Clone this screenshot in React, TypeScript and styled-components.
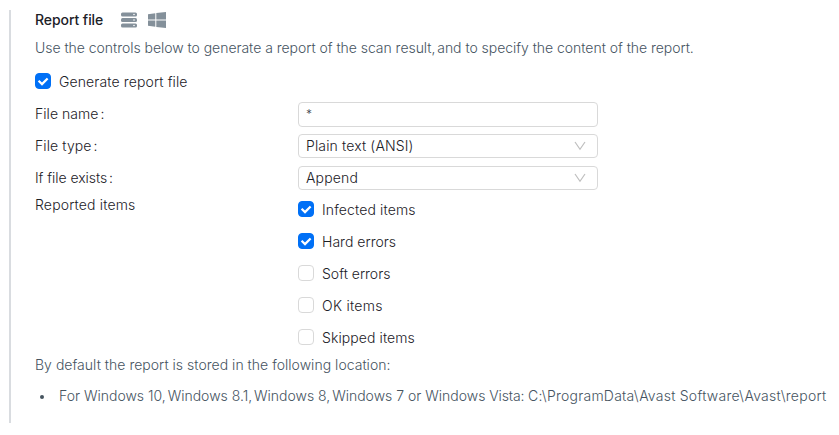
import React from "react";
import styled, { createGlobalStyle } from "styled-components";

const GlobalStyle = createGlobalStyle`
  * { box-sizing: border-box; }
  body {
    margin: 0;
    background: #fff;
    overflow: hidden;
    font-family: Inter, "Liberation Sans", sans-serif;
    font-size: 14px;
    font-weight: 300;
    line-height: 22px;
    color: #1c2127;
  }
`;

const Section = styled.section`
  margin: 10px 0 0 9px;
  height: 413px;
  padding-left: 24px;
  border-left: 2px solid #d9dce0;
`;

const Header = styled.header`
  display: flex;
  align-items: center;
  height: 20px;
`;

const Title = styled.h2`
  width: 86px;
  margin: 0;
  font-size: 14px;
  font-weight: 500;
  line-height: 20px;
  letter-spacing: -0.07px;
  white-space: nowrap;
`;

const PlatformIcon = styled.svg<{ $gap?: number }>`
  display: block;
  flex: none;
  margin-right: ${(p) => p.$gap ?? 0}px;
  fill: #84909a;
`;

const Text = styled.span<{ $track?: number }>`
  letter-spacing: ${(p) => p.$track ?? 0}px;
  white-space: nowrap;
`;

const Thin = styled.span`
  letter-spacing: -2.1px;
`;

const Wildcard = styled.span`
  font-size: 12px;
  line-height: 20px;
  color: #3c444b;
`;

const Note = styled.p<{ $top: number }>`
  margin: ${(p) => p.$top}px 0 0;
  height: 22px;
  color: #46545f;
`;

const CheckRow = styled.label`
  display: flex;
  align-items: center;
  height: 32px;
`;

const Toggle = styled.div`
  margin-top: 7px;
`;

const Box = styled.span<{ $on: boolean }>`
  display: flex;
  align-items: center;
  justify-content: center;
  flex: none;
  width: 16px;
  height: 16px;
  margin: 0 8px 2px 0;
  border: 1px solid ${(p) => (p.$on ? "#0070f6" : "#d9d9d9")};
  border-radius: 4px;
  background: ${(p) => (p.$on ? "#0070f6" : "#fff")};
`;

const Form = styled.div`
  display: grid;
  grid-template-columns: 263px 300px;
  grid-template-rows: repeat(3, 32px) 160px;
  align-items: center;
`;

const ItemsLabel = styled.div`
  align-self: start;
`;

const Field = styled.div<{ $height: number }>`
  display: flex;
  align-items: center;
  justify-content: space-between;
  height: ${(p) => p.$height}px;
  padding: 0 11px 0 7px;
  border: 1px solid #d9d9d9;
  border-radius: 4px;
`;

const List = styled.ul`
  margin: 9px 0 0;
  padding: 0;
  list-style: none;
  color: #46545f;
`;

const Item = styled.li`
  display: flex;
  align-items: center;
  height: 22px;
`;

const Bullet = styled.span`
  flex: none;
  width: 4px;
  height: 4px;
  margin: 1px 15px 0 5px;
  border-radius: 50%;
  background: #46545f;
`;

const Tick = () => (
  <svg width="14" height="14" viewBox="0 0 14 14" fill="none" stroke="#fff" strokeWidth="2.2">
    <path d="M2.6 6.8 6 10.1 11.6 4.4" />
  </svg>
);

const Chevron = () => (
  <svg width="12" height="12" viewBox="0 0 12 12" fill="none" stroke="#bfbfbf" strokeWidth="1.2">
    <path d="M1 2 6 9.3 11 2" />
  </svg>
);

const FieldLabel = ({ children, track }: { children: string; track: number }) => (
  <Text $track={track}>
    {children}
    <Thin> </Thin>:
  </Text>
);

const Check = ({ label, on = false, track }: { label: string; on?: boolean; track: number }) => (
  <CheckRow>
    <Box $on={on}>{on && <Tick />}</Box>
    <Text $track={track}>{label}</Text>
  </CheckRow>
);

const options = [
  { label: "Infected items", on: true, track: 0.13 },
  { label: "Hard errors", on: true, track: 0.02 },
  { label: "Soft errors", on: false, track: 0 },
  { label: "OK items", on: false, track: 0.28 },
  { label: "Skipped items", on: false, track: 0.09 },
];

export default function App() {
  return (
    <>
      <GlobalStyle />
      <Section>
        <Header>
          <Title>Report file</Title>
          <PlatformIcon $gap={11} width="16" height="16" viewBox="0 0 16 16">
            <rect x="0" y="0.5" width="16" height="4" rx="1.5" />
            <rect x="0" y="6" width="16" height="4" rx="1.5" />
            <rect x="0" y="11.5" width="16" height="4" rx="1.5" />
            <g fill="#fff">
              <circle cx="13" cy="2.5" r="0.8" />
              <circle cx="13" cy="8" r="0.8" />
              <circle cx="13" cy="13.5" r="0.8" />
            </g>
          </PlatformIcon>
          <PlatformIcon width="18" height="16" viewBox="0 0 18 16">
            <path d="M0 2.3 7.3 1.2V7.5H0zM8.3 1.1 18 0V7.5H8.3zM0 8.5H7.3V14.8L0 13.7zM8.3 8.5H18V16L8.3 14.9z" />
          </PlatformIcon>
        </Header>
        <Note $top={7}>
          <Text $track={-0.035}>
            Use the controls below to generate a report of the scan result,<Thin> </Thin>and to specify the content of
            the report.
          </Text>
        </Note>
        <Toggle>
          <Check label="Generate report file" on track={0.12} />
        </Toggle>
        <Form>
          <FieldLabel track={0.05}>File name</FieldLabel>
          <Field $height={25}>
            <Wildcard>*</Wildcard>
          </Field>
          <FieldLabel track={0.1}>File type</FieldLabel>
          <Field $height={24}>
            <Text $track={0.14}>Plain text (ANSI)</Text>
            <Chevron />
          </Field>
          <FieldLabel track={-0.05}>If file exists</FieldLabel>
          <Field $height={24}>
            <Text $track={0.15}>Append</Text>
            <Chevron />
          </Field>
          <ItemsLabel>
            <Text $track={0.16}>Reported items</Text>
          </ItemsLabel>
          <div>
            {options.map((o) => (
              <Check key={o.label} {...o} />
            ))}
          </div>
        </Form>
        <Note $top={0}>
          <Text $track={0.025}>By default the report is stored in the following location:</Text>
        </Note>
        <List>
          <Item>
            <Bullet />
            <Text>
              For Windows 10,<Thin> </Thin>Windows 8.1,<Thin> </Thin>Windows 8,<Thin> </Thin>Windows 7 or Windows{" "}
              <Text $track={-0.15}>Vista: </Text>
              <Text $track={0.24}>{"C:\\ProgramData\\Avast Software\\Avast\\report"}</Text>
            </Text>
          </Item>
        </List>
      </Section>
    </>
  );
}
